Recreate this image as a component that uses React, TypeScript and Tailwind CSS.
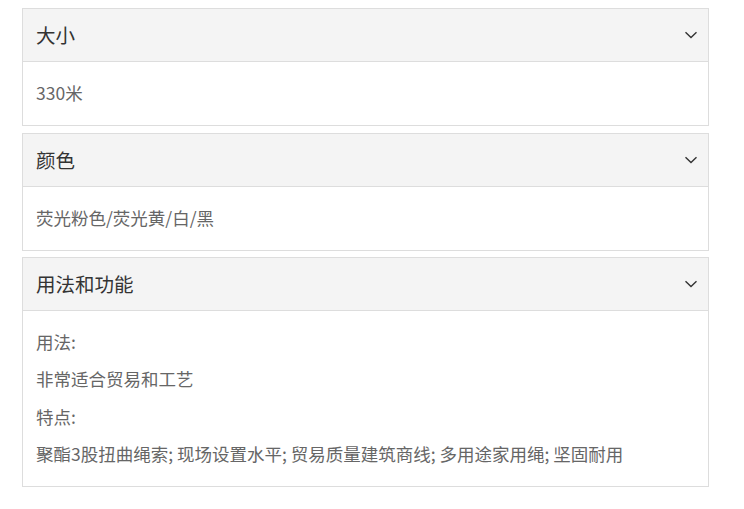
const sections = [
  { title: '大小', lines: ['330米'] },
  { title: '颜色', lines: ['荧光粉色/荧光黄/白/黑'] },
  {
    title: '用法和功能',
    lines: [
      '用法:',
      '非常适合贸易和工艺',
      '特点:',
      '聚酯3股扭曲绳索; 现场设置水平; 贸易质量建筑商线; 多用途家用绳; 坚固耐用',
    ],
  },
];

function Chevron() {
  return (
    <svg width="12" height="8" viewBox="0 0 12 8" fill="none" className="text-[#333]">
      <path d="M0.5 1.2 L6 6.6 L11.5 1.2" stroke="currentColor" strokeWidth="1.4" />
    </svg>
  );
}

export default function App() {
  return (
    <div
      className="w-[744px] h-[509px] bg-white pt-2 pl-[22px]"
      style={{ fontFamily: '"Noto Sans CJK SC", "Noto Sans", sans-serif' }}
    >
      <div className="flex w-[687px] flex-col gap-[6.5px]">
        {sections.map((s) => (
          <div key={s.title} className="border border-[#dddddd]">
            <div className="flex h-[53px] items-center justify-between border-b border-[#dddddd] bg-[#f4f4f4] pl-[13px] pr-[11px]">
              <span className="text-[19.5px] leading-6 text-[#333]">{s.title}</span>
              <Chevron />
            </div>
            <div className="flex flex-col gap-[13.33px] px-[13px] pt-[19px] pb-[20px]">
              {s.lines.map((l) => (
                <p key={l} className="text-[17.5px] leading-6 text-[#666]">
                  {l}
                </p>
              ))}
            </div>
          </div>
        ))}
      </div>
    </div>
  );
}
